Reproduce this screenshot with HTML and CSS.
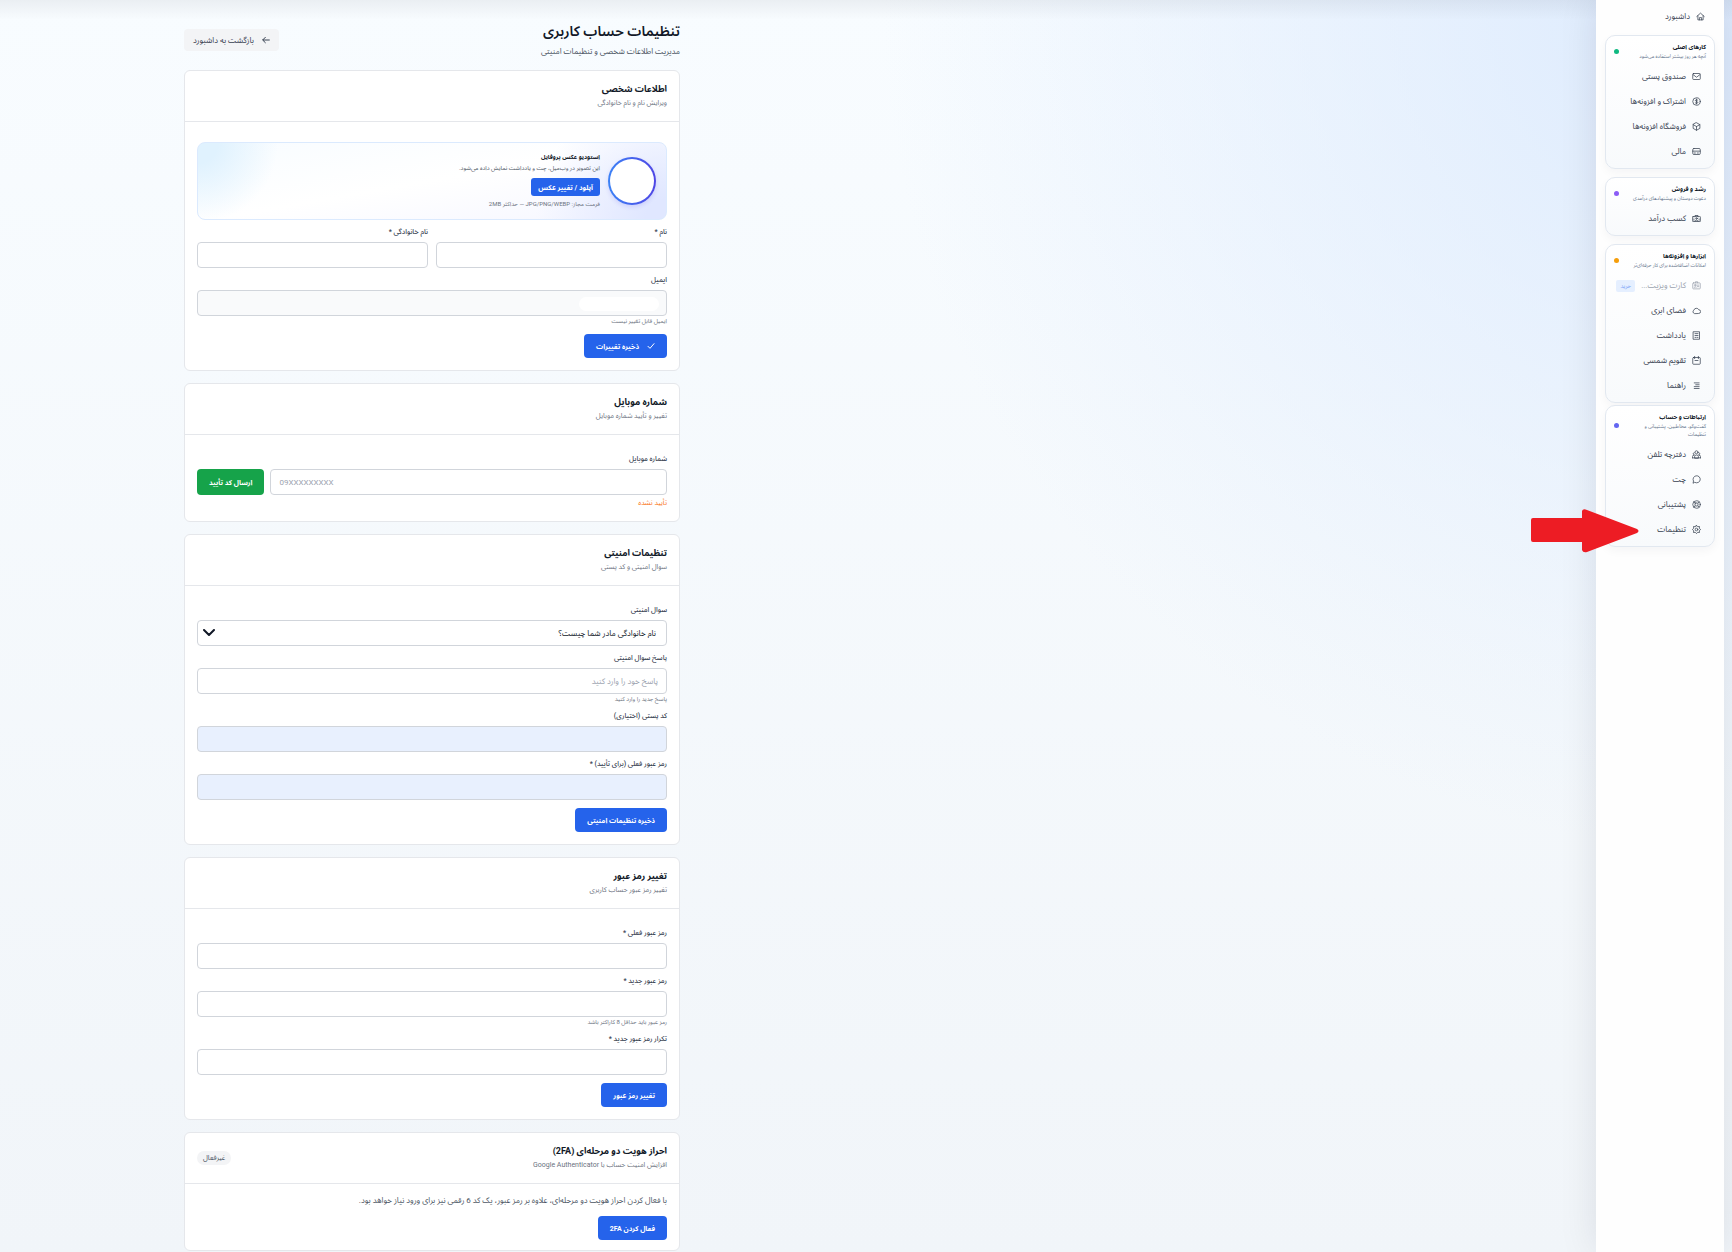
FILE: index.html
```
<!DOCTYPE html>
<html lang="fa" dir="rtl">
<head>
    <meta charset="UTF-8">
    <meta name="viewport" content="width=device-width, initial-scale=1.0">
    <title>تنظیمات حساب کاربری</title>
    <link rel="stylesheet" href="styles.css">
</head>
<body>
    <svg class="sprite" aria-hidden="true">
        <symbol id="i-home" viewBox="0 0 24 24"><path d="M2 12 12 3l10 9M5 10v11h14V10M9 21v-6h6v6"/></symbol>
        <symbol id="i-mail" viewBox="0 0 24 24"><rect x="2" y="4" width="20" height="16" rx="2"/><path d="m3 7 9 7 9-7"/></symbol>
        <symbol id="i-coin" viewBox="0 0 24 24"><circle cx="12" cy="12" r="10"/><path d="M15.500 8.500C14 7 9 7 9 9.500s6.500 2 6.500 5-5 3-7 1M12 5.500v13"/></symbol>
        <symbol id="i-box" viewBox="0 0 24 24"><path d="m12 2 9 5v10l-9 5-9-5V7zM3 7l9 5 9-5M12 12v10"/></symbol>
        <symbol id="i-card" viewBox="0 0 24 24"><rect x="2" y="4" width="20" height="16" rx="3"/><path d="M2 11h20M6 16h3M14 16h3"/></symbol>
        <symbol id="i-cash" viewBox="0 0 24 24"><rect x="1" y="7" width="22" height="13" rx="2"/><path d="M8 7V4h8v3M5 17v-4M19 17v-4"/><circle cx="12" cy="12" r="2"/><path d="M8 19c1-4 7-4 8 0"/></symbol>
        <symbol id="i-id" viewBox="0 0 24 24"><rect x="2" y="5" width="20" height="16" rx="2"/><path d="M9 5V2h6v3M14 11h4M14 15h4M6 17c0-3 5-3 5 0"/><circle cx="8.500" cy="11" r="2"/></symbol>
        <symbol id="i-cloud" viewBox="0 0 24 24"><path d="M6 20a5 5 0 0 1-1-9 7 7 0 0 1 13-1 5 5 0 0 1 0 10z"/></symbol>
        <symbol id="i-note" viewBox="0 0 24 24"><path d="M4 2h16v20H4zM8 7h8M8 12h8M8 17h3M14 17h2"/></symbol>
        <symbol id="i-cal" viewBox="0 0 24 24"><rect x="2" y="4" width="20" height="18" rx="2"/><path d="M7 1v6M17 1v6M8 12h8"/></symbol>
        <symbol id="i-lines" viewBox="0 0 24 24"><path d="M6 5h13M10 10h9M6 15h13M6 20h13"/></symbol>
        <symbol id="i-people" viewBox="0 0 24 24"><circle cx="12" cy="6" r="4"/><path d="M7 21v-4c0-5 10-5 10 0v4zM6 7c-4 0-4 6 0 6M1 21v-4q0-3 4-3M18 7c4 0 4 6 0 6M23 21v-4q0-3-4-3M1 21h22"/></symbol>
        <symbol id="i-chat" viewBox="0 0 24 24"><path d="M3 21l1-5a9.500 9.500 0 1 1 4 4z"/></symbol>
        <symbol id="i-help" viewBox="0 0 24 24"><circle cx="12" cy="12" r="10"/><rect x="8" y="8" width="8" height="8" rx="2"/><path d="m5 5 3 3M19 5l-3 3M5 19l3-3M19 19l-3-3"/></symbol>
        <symbol id="i-gear" viewBox="0 0 24 24"><path d="m12 1 3 3.500 5-.5-.5 5L23 12l-3.500 3 .5 5-5-.5-3 3.500-3-3.500-5 .5.500-5L1 12l3.500-3L4 4l5 .5z"/><circle cx="12" cy="12" r="3.500"/></symbol>
        <symbol id="i-back" viewBox="0 0 24 24"><path d="M22 12H3M10 4l-8 8 8 8"/></symbol>
        <symbol id="i-check" viewBox="0 0 24 24"><path d="m3 13 6 6L21 5"/></symbol>
    </svg>

    <div class="layout">
        <aside class="sidebar">
            <a class="nav-item nav-home" href="#"><svg class="icon"><use href="#i-home"/></svg>داشبورد</a>

            <nav class="group">
                <div class="group-head">
                    <div>
                        <h3>کارهای اصلی</h3>
                        <p>آنچه هر روز بیشتر استفاده می‌شود</p>
                    </div>
                    <span class="dot green"></span>
                </div>
                <a class="nav-item" href="#"><svg class="icon"><use href="#i-mail"/></svg>صندوق پستی</a>
                <a class="nav-item" href="#"><svg class="icon"><use href="#i-coin"/></svg>اشتراک و افزونه‌ها</a>
                <a class="nav-item" href="#"><svg class="icon"><use href="#i-box"/></svg>فروشگاه افزونه‌ها</a>
                <a class="nav-item" href="#"><svg class="icon"><use href="#i-card"/></svg>مالی</a>
            </nav>

            <nav class="group">
                <div class="group-head">
                    <div>
                        <h3>رشد و فروش</h3>
                        <p>دعوت دوستان و پیشنهادهای درآمدی</p>
                    </div>
                    <span class="dot purple"></span>
                </div>
                <a class="nav-item" href="#"><svg class="icon"><use href="#i-cash"/></svg>کسب درآمد</a>
            </nav>

            <nav class="group group-tools">
                <div class="group-head">
                    <div>
                        <h3>ابزارها و افزونه‌ها</h3>
                        <p>امکانات اضافه‌شده برای کار حرفه‌ای‌تر</p>
                    </div>
                    <span class="dot orange"></span>
                </div>
                <a class="nav-item locked" href="#"><svg class="icon"><use href="#i-id"/></svg>کارت ویزیت...<span class="buy">خرید</span></a>
                <a class="nav-item" href="#"><svg class="icon"><use href="#i-cloud"/></svg>فضای ابری</a>
                <a class="nav-item" href="#"><svg class="icon"><use href="#i-note"/></svg>یادداشت</a>
                <a class="nav-item" href="#"><svg class="icon"><use href="#i-cal"/></svg>تقویم شمسی</a>
                <a class="nav-item" href="#"><svg class="icon"><use href="#i-lines"/></svg>راهنما</a>
            </nav>

            <nav class="group">
                <div class="group-head">
                    <div>
                        <h3>ارتباطات و حساب</h3>
                        <p>گفت‌وگو، مخاطبین، پشتیبانی و<br>تنظیمات</p>
                    </div>
                    <span class="dot indigo"></span>
                </div>
                <a class="nav-item" href="#"><svg class="icon"><use href="#i-people"/></svg>دفترچه تلفن</a>
                <a class="nav-item" href="#"><svg class="icon"><use href="#i-chat"/></svg>چت</a>
                <a class="nav-item" href="#"><svg class="icon"><use href="#i-help"/></svg>پشتیبانی</a>
                <a class="nav-item current" href="#"><svg class="icon"><use href="#i-gear"/></svg>تنظیمات
                    <svg class="pointer" viewBox="0 0 108 44"><path d="M2 9h49V2q1-3 5-1l50 19q3 2 0 4L56 43q-4 1-5-2v-8H2q-2 0-2-2V11q0-2 2-2z"/></svg>
                </a>
            </nav>
        </aside>

        <main class="main">
            <div class="content">
                <header class="page-head">
                    <div>
                        <h1>تنظیمات حساب کاربری</h1>
                        <p>مدیریت اطلاعات شخصی و تنظیمات امنیتی</p>
                    </div>
                    <a class="back" href="#"><svg class="icon"><use href="#i-back"/></svg>بازگشت به داشبورد</a>
                </header>

                <section class="card">
                    <div class="card-head">
                        <div>
                            <h2>اطلاعات شخصی</h2>
                            <p>ویرایش نام و نام خانوادگی</p>
                        </div>
                    </div>
                    <form class="card-body">
                        <div class="studio">
                            <div class="avatar"></div>
                            <div class="studio-text">
                                <h4>استودیو عکس پروفایل</h4>
                                <p>این تصویر در وب‌میل، چت و یادداشت نمایش داده می‌شود.</p>
                                <button type="button" class="btn btn-small">آپلود / تغییر عکس</button>
                                <small>فرمت مجاز: JPG/PNG/WEBP — حداکثر 2MB</small>
                            </div>
                        </div>
                        <div class="two-cols">
                            <div class="field">
                                <label for="fname">نام *</label>
                                <input type="text" id="fname">
                            </div>
                            <div class="field">
                                <label for="lname">نام خانوادگی *</label>
                                <input type="text" id="lname">
                            </div>
                        </div>
                        <div class="field">
                            <label for="email">ایمیل</label>
                            <div class="email-box">
                                <input type="email" id="email" disabled>
                                <span class="mask"></span>
                            </div>
                            <span class="hint">ایمیل قابل تغییر نیست</span>
                        </div>
                        <button type="button" class="btn btn-icon"><svg class="icon"><use href="#i-check"/></svg>ذخیره تغییرات</button>
                    </form>
                </section>

                <section class="card">
                    <div class="card-head">
                        <div>
                            <h2>شماره موبایل</h2>
                            <p>تغییر و تأیید شماره موبایل</p>
                        </div>
                    </div>
                    <form class="card-body">
                        <div class="field">
                            <label for="mobile">شماره موبایل</label>
                            <div class="phone-row">
                                <input type="tel" id="mobile" dir="ltr" placeholder="09XXXXXXXXX">
                                <button type="button" class="btn btn-green">ارسال کد تأیید</button>
                            </div>
                            <span class="status">تأیید نشده</span>
                        </div>
                    </form>
                </section>

                <section class="card">
                    <div class="card-head">
                        <div>
                            <h2>تنظیمات امنیتی</h2>
                            <p>سوال امنیتی و کد پستی</p>
                        </div>
                    </div>
                    <form class="card-body">
                        <div class="field">
                            <label for="question">سوال امنیتی</label>
                            <select id="question">
                                <option>نام خانوادگی مادر شما چیست؟</option>
                            </select>
                        </div>
                        <div class="field">
                            <label for="answer">پاسخ سوال امنیتی</label>
                            <input type="text" id="answer" placeholder="پاسخ خود را وارد کنید">
                            <span class="hint">پاسخ جدید را وارد کنید</span>
                        </div>
                        <div class="field">
                            <label for="postal">کد پستی (اختیاری)</label>
                            <input type="text" id="postal" class="filled">
                        </div>
                        <div class="field">
                            <label for="confirm">رمز عبور فعلی (برای تأیید) *</label>
                            <input type="password" id="confirm" class="filled">
                        </div>
                        <button type="button" class="btn">ذخیره تنظیمات امنیتی</button>
                    </form>
                </section>

                <section class="card">
                    <div class="card-head">
                        <div>
                            <h2>تغییر رمز عبور</h2>
                            <p>تغییر رمز عبور حساب کاربری</p>
                        </div>
                    </div>
                    <form class="card-body">
                        <div class="field">
                            <label for="oldpass">رمز عبور فعلی *</label>
                            <input type="password" id="oldpass">
                        </div>
                        <div class="field">
                            <label for="newpass">رمز عبور جدید *</label>
                            <input type="password" id="newpass">
                            <span class="hint">رمز عبور باید حداقل 8 کاراکتر باشد</span>
                        </div>
                        <div class="field">
                            <label for="repass">تکرار رمز عبور جدید *</label>
                            <input type="password" id="repass">
                        </div>
                        <button type="button" class="btn">تغییر رمز عبور</button>
                    </form>
                </section>

                <section class="card">
                    <div class="card-head">
                        <div>
                            <h2>احراز هویت دو مرحله‌ای (2FA)</h2>
                            <p>افزایش امنیت حساب با Google Authenticator</p>
                        </div>
                        <span class="badge">غیرفعال</span>
                    </div>
                    <div class="card-body compact">
                        <p class="desc">با فعال کردن احراز هویت دو مرحله‌ای، علاوه بر رمز عبور، یک کد 6 رقمی نیز برای ورود نیاز خواهد بود.</p>
                        <button type="button" class="btn">فعال کردن 2FA</button>
                    </div>
                </section>
            </div>
        </main>
    </div>
</body>
</html>
```
FILE: styles.css
```
* { box-sizing: border-box; margin: 0; padding: 0; }
body {
    font-family: Roboto, "Noto Sans Arabic", "DejaVu Sans", sans-serif;
    font-size: 8px;
    color: #111827;
    background:
        linear-gradient(to bottom, rgba(15, 23, 42, 0.06), rgba(15, 23, 42, 0) 20px),
        radial-gradient(ellipse 850px 850px at 100% 0, #dceafd, rgba(220, 234, 253, 0)),
        linear-gradient(to bottom, #f8fcff, #f1f5f9);
    min-height: 100vh;
}
h1, h2, h3, h4 { font-weight: bold; }
a { color: inherit; text-decoration: none; }
input, select, button { font-family: inherit; font-size: 8px; }
.sprite { position: absolute; width: 0; height: 0; }
.icon { width: 9px; height: 9px; flex: none; fill: none; stroke: currentColor; stroke-width: 2; stroke-linecap: round; stroke-linejoin: round; }

.layout { display: flex; min-height: 100vh; padding-right: 8px; }

/* sidebar */
.sidebar { width: 128px; flex: none; background: #fefefe; padding: 4px 9px; box-shadow: 0 0 36px rgba(15, 23, 42, 0.1); }
.nav-item { display: flex; align-items: center; gap: 6px; height: 25px; padding: 0 13px; color: #374151; white-space: nowrap; }
.nav-home { padding: 0 10px; margin-bottom: 6px; }
.group { border: 1px solid #e2e8f0; border-radius: 10px; margin-bottom: 8px; padding-bottom: 4px; background: linear-gradient(to bottom, #fff, #f8fafc); box-shadow: 0 4px 10px rgba(15, 23, 42, 0.04); }
.group-tools { margin-bottom: 2px; }
.group-head { display: flex; justify-content: space-between; align-items: center; padding: 6px 8px 4px; white-space: nowrap; }
.group-head h3 { font-size: 6px; line-height: 10px; }
.group-head p { font-size: 5px; line-height: 8px; color: #64748b; }
.dot { width: 5px; height: 5px; border-radius: 50%; flex: none; }
.green { background: #10b981; }
.purple { background: #8b5cf6; }
.orange { background: #f59e0b; }
.indigo { background: #6366f1; }
.locked { color: #9ca3af; }
.buy { margin-right: auto; background: #e5efff; color: #7ea6f8; font-size: 6px; line-height: 12px; padding: 0 4px; border-radius: 2px; }
.current { position: relative; }
.pointer { position: absolute; left: -75px; top: -8px; width: 108px; height: 44px; fill: #ed1c24; }

/* page */
.main { flex: 1; padding: 22px 0 0 184px; }
.content { max-width: 496px; margin-right: auto; }
.page-head { display: flex; justify-content: space-between; align-items: center; margin-bottom: 12px; }
.page-head h1 { font-size: 14px; line-height: 18px; font-weight: 600; }
.page-head p { font-size: 8px; line-height: 12px; margin-top: 6px; color: #4b5563; }
.back { display: flex; align-items: center; gap: 8px; height: 22px; padding: 0 9px; border-radius: 4px; background: #f3f4f6; color: #374151; }

.card { background: #fff; border: 1px solid #e5e7eb; border-radius: 6px; margin-bottom: 12px; }
.card:last-child { margin-bottom: 0; }
.card-head { display: flex; justify-content: space-between; align-items: center; padding: 12px; border-bottom: 1px solid #e5e7eb; }
.card-head h2 { font-size: 9px; line-height: 12px; margin-bottom: 2px; }
.card-head p { font-size: 7px; line-height: 12px; color: #6b7280; }
.card-body { display: flex; flex-direction: column; align-items: stretch; gap: 8px; padding: 20px 12px 12px; }
.compact { padding: 10px 12px; }

.studio { display: flex; align-items: center; gap: 8px; height: 78px; padding: 0 10px; border: 1px solid #dbeafe; border-radius: 8px; background: radial-gradient(circle at 0 0, #e0f2fe 20px, rgba(224, 242, 254, 0) 80px), radial-gradient(circle at 100% 100%, #e0e7ff 20px, rgba(224, 231, 255, 0) 130px), linear-gradient(170deg, #f8fcff, #fff 50%, #f5f6ff); }
.avatar { width: 48px; height: 48px; border: 2px solid transparent; border-radius: 50%; background: linear-gradient(#fff, #fff) padding-box, linear-gradient(to right, #3b82f6, #4f46e5) border-box; box-shadow: 0 2px 4px rgba(79, 70, 229, 0.15); }
.studio-text h4 { font-size: 6px; line-height: 10px; }
.studio-text p { font-size: 6px; line-height: 12px; color: #4b5563; }
.studio-text small { display: block; font-size: 6px; line-height: 12px; margin-top: 2px; color: #6b7280; }

.two-cols { display: grid; grid-template-columns: 1fr 1fr; gap: 8px; }
.field { display: flex; flex-direction: column; }
.field label { font-size: 7px; line-height: 8px; margin-bottom: 6px; font-weight: 500; color: #374151; }
.field input, .field select { width: 100%; height: 26px; padding: 0 8px; border: 1px solid #d1d5db; border-radius: 4px; background-color: #fff; color: #111827; }
.field input::placeholder { color: #9ca3af; }
.field input:disabled { background-color: #f9fafb; }
.field .filled { background-color: #e8f0fe; }
.field select { appearance: none; padding: 0 10px; background: #fff url("data:image/svg+xml,%3Csvg xmlns='http://www.w3.org/2000/svg' viewBox='0 0 12 8' fill='none' stroke='%23111827' stroke-width='2' stroke-linecap='round' stroke-linejoin='round'%3E%3Cpath d='m1 1 5 5 5-5'/%3E%3C/svg%3E") no-repeat 5px center / 12px 8px; }
.hint { font-size: 6px; line-height: 8px; margin: 1px 0; color: #6b7280; }
.status { font-size: 7px; line-height: 10px; margin: 3px 0 1px; color: #f97316; }
.email-box { position: relative; }
.email-box input { display: block; }
.mask { position: absolute; top: 7px; right: 8px; width: 80px; height: 14px; border-radius: 7px; background: #fff; }
.phone-row { display: flex; gap: 6px; }

.btn { align-self: flex-start; height: 24px; padding: 0 12px; border: none; border-radius: 4px; background: #2563eb; color: #fff; font-size: 7px; font-weight: bold; white-space: nowrap; cursor: pointer; }
.btn:hover { background: #1d4ed8; }
.btn-small { display: block; height: 18px; padding: 0 7px; margin-top: 4px; border-radius: 3px; }
.btn-icon { display: flex; align-items: center; gap: 8px; }
.btn-icon .icon, .back .icon { width: 8px; height: 8px; stroke-width: 3; }
.btn-green { height: 26px; background: #16a34a; }
.badge { font-size: 7px; line-height: 14px; padding: 0 6px; border-radius: 7px; background: #f3f4f6; color: #4b5563; }
.desc { font-size: 8px; line-height: 14px; color: #4b5563; }
```
